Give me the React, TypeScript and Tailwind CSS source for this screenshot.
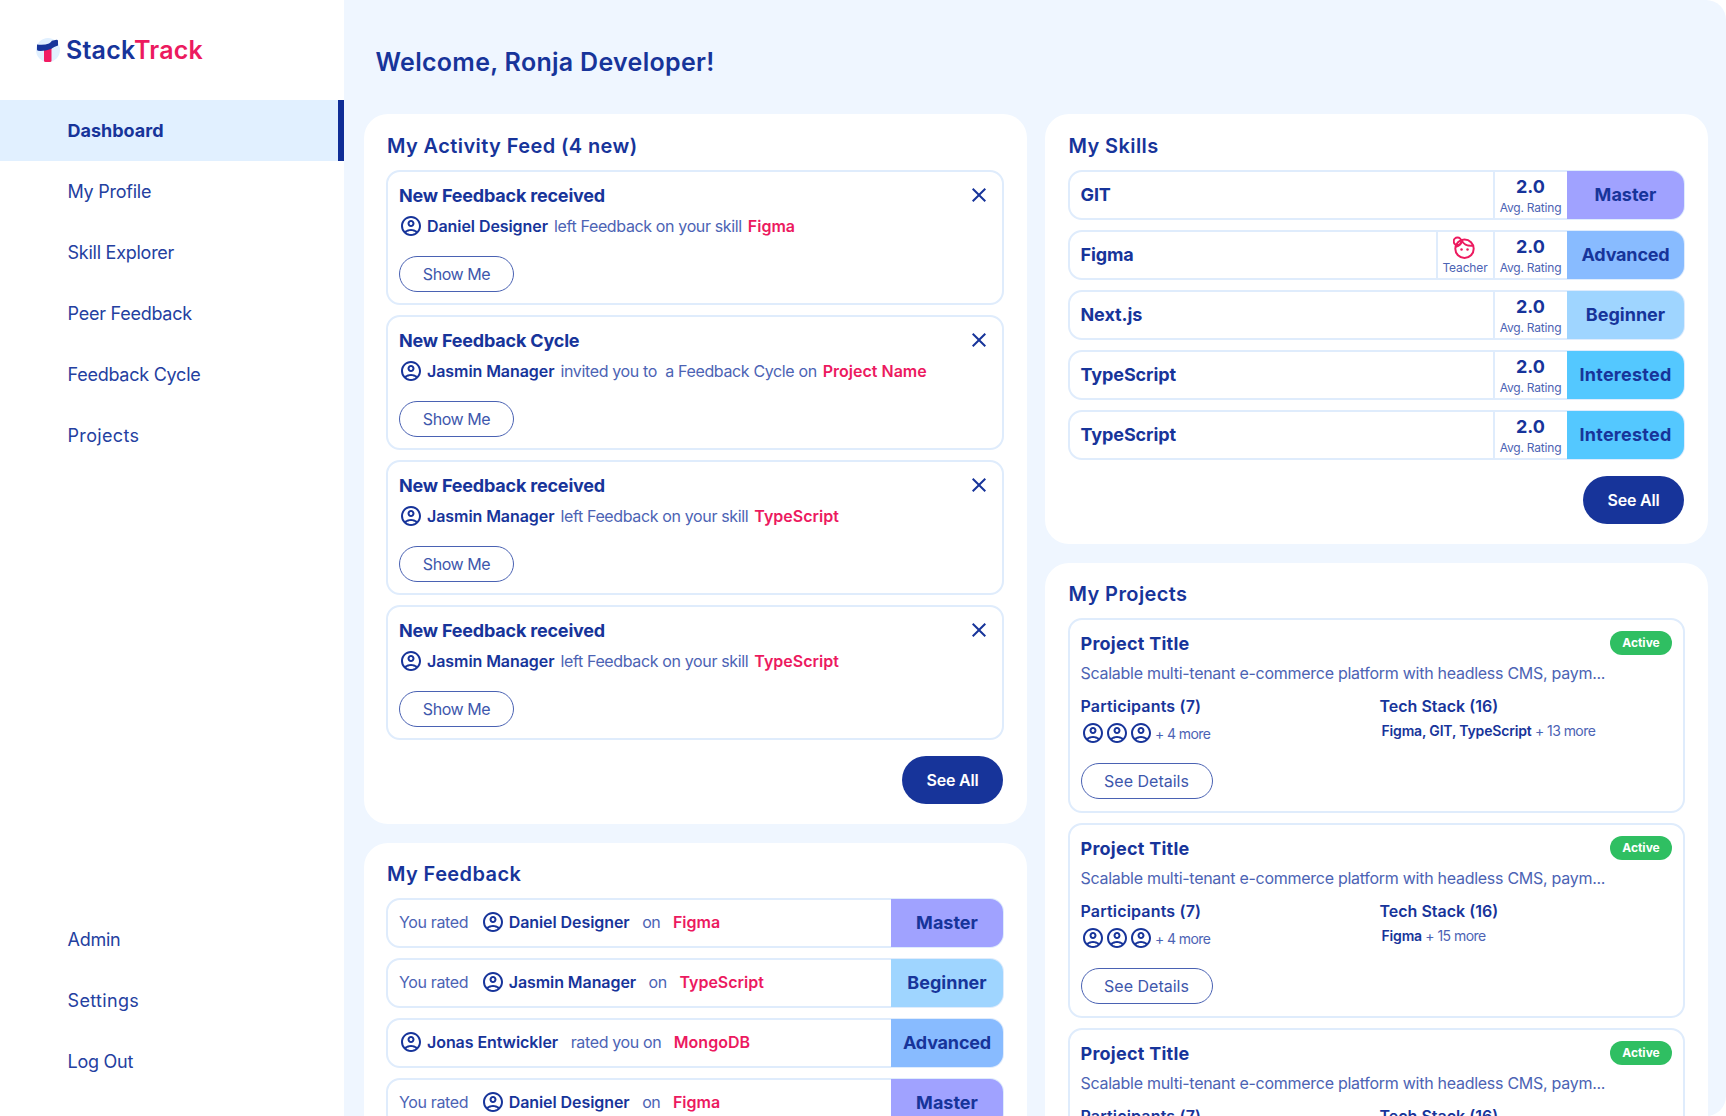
import type { ReactNode } from "react";
import { MdClose, MdOutlineAccountCircle } from "react-icons/md";

const levels: Record<string, string> = {
  Master: "bg-[#a0a2ff]",
  Advanced: "bg-[#88bbff] tracking-[-0.2px]",
  Beginner: "bg-[#9fd5ff]",
  Interested: "bg-[#54c8ff] tracking-[0.25px]",
};

function Logo() {
  return (
    <svg width="24" height="24" viewBox="0 0 24 24" fill="none">
      <circle cx="12" cy="12" r="12" fill="#e1f0ff" />
      <path d="M8 10.5L15.5 9.5V22.5Q15.5 24 14 24H9.5Q8 24 8 22.5Z" fill="#f21b62" />
      <path d="M1 6.5Q8 7.5 13 5.5Q15.5 4 15.8 2.8L20.5 1.8Q22 1.8 22 3V7.5Q18 8.5 15 11Q8 13.5 2 12.8Q1 12.6 1 11.5Z" fill="#17349a" />
    </svg>
  );
}

function TeacherFace() {
  return (
    <svg width="24" height="24" viewBox="0.5 0 24 24" fill="none" stroke="#ec1a5f" strokeWidth="2" strokeLinecap="round">
      <circle cx="12" cy="12.8" r="9.2" />
      <circle cx="5" cy="5.3" r="3.8" />
      <path d="M9.3 4.3C10.3 7.8 14.5 10.3 20.6 9.7" />
      <path d="M9.3 4.6C9 7.6 7 9.9 3.3 10.8" />
      <circle cx="9" cy="13.4" r="1.25" fill="#ec1a5f" stroke="none" />
      <circle cx="15" cy="13.4" r="1.25" fill="#ec1a5f" stroke="none" />
    </svg>
  );
}

function NavItem({ label, active, wide }: { label: string; active?: boolean; wide?: boolean }) {
  if (active) {
    return (
      <a className="flex h-[61px] items-center border-r-[6px] border-[#0f2d96] bg-[#e1f0ff] pl-[67.5px] text-[18px] font-bold">
        {label}
      </a>
    );
  }
  return (
    <a
      className={`flex h-[61px] items-center pl-[67.5px] text-[18px] text-[#2440a0] ${wide ? "tracking-[0.35px]" : "tracking-[-0.25px]"}`}
    >
      {label}
    </a>
  );
}

function Card({ title, children, className = "" }: { title: string; children: ReactNode; className?: string }) {
  return (
    <section className={`flex w-[663px] shrink-0 flex-col rounded-3xl bg-white pr-[23px] ${className}`}>
      <h2 className="mb-1.5 ml-px h-9 text-[20px] font-semibold leading-9 tracking-[0.4px]">{title}</h2>
      {children}
    </section>
  );
}

function SeeAll() {
  return (
    <button className="mt-4 mr-px h-12 w-[101px] self-end rounded-full bg-[#17349a] text-[16px] font-semibold tracking-[-0.2px] text-white">
      See All
    </button>
  );
}

function Person({ name }: { name: string }) {
  return (
    <span className="flex items-center gap-1">
      <MdOutlineAccountCircle className="size-6" />
      <span className="font-semibold tracking-[-0.07px]">{name}</span>
    </span>
  );
}

function Muted({ children }: { children: ReactNode }) {
  return <span className="whitespace-pre tracking-[-0.36px] text-[#4c63b4]">{children}</span>;
}

function Target({ children }: { children: ReactNode }) {
  return <span className="font-semibold text-[#ec1a5f]">{children}</span>;
}

function Activity({ title, name, text, target }: { title: string; name: string; text: string; target: string }) {
  return (
    <article className="h-[135px] rounded-[14px] border-2 border-[#dfecfc] pl-[11px] pr-[11px] pt-[9px]">
      <div className="flex h-7 items-center justify-between">
        <h3 className="text-[18px] font-bold tracking-[-0.2px]">{title}</h3>
        <MdClose className="size-6" />
      </div>
      <div className="flex h-[33px] items-center gap-1.5 text-[16px]">
        <Person name={name} />
        <Muted>{text}</Muted>
        <Target>{target}</Target>
      </div>
      <button className="mt-3.5 h-9 w-[115px] rounded-full border-[1.5px] border-[#4a62b3] text-[16px] tracking-[-0.45px] text-[#3e57ac]">
        Show Me
      </button>
    </article>
  );
}

function Level({ level, className }: { level: string; className: string }) {
  return (
    <div
      className={`-mr-px flex h-12 shrink-0 items-center justify-center rounded-r-[13px] pb-0.5 text-[18px] font-bold ${levels[level]} ${className}`}
    >
      {level}
    </div>
  );
}

function Skill({ name, level, teacher }: { name: string; level: string; teacher?: boolean }) {
  return (
    <div className="flex h-[50px] items-center rounded-[14px] border-2 border-[#dfecfc]">
      <span className="flex-1 pb-0.5 pl-[11px] text-[18px] font-bold tracking-[-0.1px]">{name}</span>
      {teacher && (
        <div className="flex h-full w-[57px] flex-col items-center border-l-2 border-[#dfecfc] pr-px pt-1">
          <TeacherFace />
          <span className="text-[12px] leading-4 tracking-[-0.15px] text-[#4c63b4]">Teacher</span>
        </div>
      )}
      <div className="flex h-full w-[74px] flex-col items-center border-l-2 border-[#dfecfc] pr-px pt-[3px]">
        <span className="text-[18px] font-bold leading-6">2.0</span>
        <span className="pt-px text-[12px] leading-4 tracking-[-0.2px] text-[#4c63b4]">Avg. Rating</span>
      </div>
      <Level level={level} className="w-[117px]" />
    </div>
  );
}

function FeedbackRow({ children, level }: { children: ReactNode; level: string }) {
  return (
    <div className="flex h-[50px] shrink-0 items-center rounded-[14px] border-2 border-[#dfecfc] text-[16px]">
      <div className="flex flex-1 items-center gap-[12.5px] pb-0.5 pl-[11px]">{children}</div>
      <Level level={level} className="w-[112px]" />
    </div>
  );
}

function Project({ stack, more }: { stack: string; more: string }) {
  return (
    <article className="h-[195px] shrink-0 rounded-[14px] border-2 border-[#dfecfc] pl-[11px] pr-[11px] pt-[9px]">
      <div className="flex h-7 items-center justify-between">
        <h3 className="text-[18px] font-bold tracking-[0.25px]">Project Title</h3>
        <span className="flex h-6 w-[62px] items-center justify-center rounded-full bg-[#2fbf62] text-[12px] font-bold text-white">
          Active
        </span>
      </div>
      <p className="h-[33px] whitespace-nowrap text-[16px] leading-8 tracking-[-0.275px] text-[#4c63b4]">
        Scalable multi-tenant e-commerce platform with headless CMS, paym...
      </p>
      <div className="flex">
        <div className="w-[299px]">
          <h4 className="h-[31px] text-[16px] font-semibold leading-8 tracking-[0.17px]">Participants (7)</h4>
          <div className="flex h-6 items-center text-[14px] text-[#4c63b4]">
            <MdOutlineAccountCircle className="size-6 text-[#17349a]" />
            <MdOutlineAccountCircle className="size-6 text-[#17349a]" />
            <MdOutlineAccountCircle className="size-6 text-[#17349a]" />
            <span className="ml-[2.5px] tracking-[-0.6px]">+ 4 more</span>
          </div>
        </div>
        <div>
          <h4 className="h-[31px] text-[16px] font-semibold leading-8">Tech Stack (16)</h4>
          <p className="pl-0.5 text-[14px] leading-5 tracking-[-0.55px] text-[#4c63b4]">
            <span className="font-semibold tracking-[-0.17px] text-[#17349a]">{stack}</span> {more}
          </p>
        </div>
      </div>
      <button className="mt-[18px] h-9 w-[132px] rounded-full border-[1.5px] border-[#4a62b3] text-[16px] text-[#3e57ac]">
        See Details
      </button>
    </article>
  );
}

export default function App() {
  return (
    <div className="flex h-[1116px] w-[1726px] overflow-hidden bg-white font-['Inter',sans-serif] text-[#17349a]">
      <aside className="flex w-[344px] shrink-0 flex-col justify-between pb-6">
        <div>
          <div className="flex h-[100px] items-center gap-1.5 pl-9 text-[25px] font-semibold tracking-[0.2px]">
            <Logo />
            <span className="pt-0.5">
              Stack<span className="text-[#ec1a5f]">Track</span>
            </span>
          </div>
          <NavItem label="Dashboard" active />
          <NavItem label="My Profile" />
          <NavItem label="Skill Explorer" />
          <NavItem label="Peer Feedback" />
          <NavItem label="Feedback Cycle" />
          <NavItem label="Projects" wide />
        </div>
        <div>
          <NavItem label="Admin" />
          <NavItem label="Settings" wide />
          <NavItem label="Log Out" />
        </div>
      </aside>
      <main className="flex-1 rounded-r-[20px] bg-[#eff6ff] pl-5">
        <h1 className="flex h-[114px] items-center pl-[11.5px] pt-3 text-[25px] font-semibold tracking-[0.3px]">
          Welcome, Ronja Developer!
        </h1>
        <div className="flex gap-[18px]">
          <div className="flex flex-col gap-[19px]">
            <Card title="My Activity Feed (4 new)" className="h-[710px] pl-[22px] pt-3.5">
              <div className="flex flex-col gap-2.5">
                <Activity title="New Feedback received" name="Daniel Designer" text="left Feedback on your skill" target="Figma" />
                <Activity title="New Feedback Cycle" name="Jasmin Manager" text="invited you to  a Feedback Cycle on" target="Project Name" />
                <Activity title="New Feedback received" name="Jasmin Manager" text="left Feedback on your skill" target="TypeScript" />
                <Activity title="New Feedback received" name="Jasmin Manager" text="left Feedback on your skill" target="TypeScript" />
              </div>
              <SeeAll />
            </Card>
            <Card title="My Feedback" className="h-[400px] pl-[22px] pt-[13px]">
              <div className="flex flex-col gap-2.5">
                <FeedbackRow level="Master">
                  <Muted>You rated</Muted>
                  <Person name="Daniel Designer" />
                  <Muted>on</Muted>
                  <Target>Figma</Target>
                </FeedbackRow>
                <FeedbackRow level="Beginner">
                  <Muted>You rated</Muted>
                  <Person name="Jasmin Manager" />
                  <Muted>on</Muted>
                  <Target>TypeScript</Target>
                </FeedbackRow>
                <FeedbackRow level="Advanced">
                  <Person name="Jonas Entwickler" />
                  <Muted>rated you on</Muted>
                  <Target>MongoDB</Target>
                </FeedbackRow>
                <FeedbackRow level="Master">
                  <Muted>You rated</Muted>
                  <Person name="Daniel Designer" />
                  <Muted>on</Muted>
                  <Target>Figma</Target>
                </FeedbackRow>
              </div>
            </Card>
          </div>
          <div className="flex flex-col gap-[19px]">
            <Card title="My Skills" className="h-[430px] pl-[22.5px] pt-3.5">
              <div className="flex flex-col gap-2.5">
                <Skill name="GIT" level="Master" />
                <Skill name="Figma" level="Advanced" teacher />
                <Skill name="Next.js" level="Beginner" />
                <Skill name="TypeScript" level="Interested" />
                <Skill name="TypeScript" level="Interested" />
              </div>
              <SeeAll />
            </Card>
            <Card title="My Projects" className="h-[680px] pl-[22.5px] pt-[13px]">
              <div className="flex flex-col gap-2.5">
                <Project stack="Figma, GIT, TypeScript" more="+ 13 more" />
                <Project stack="Figma" more="+ 15 more" />
                <Project stack="Figma" more="+ 15 more" />
              </div>
            </Card>
          </div>
        </div>
      </main>
    </div>
  );
}
